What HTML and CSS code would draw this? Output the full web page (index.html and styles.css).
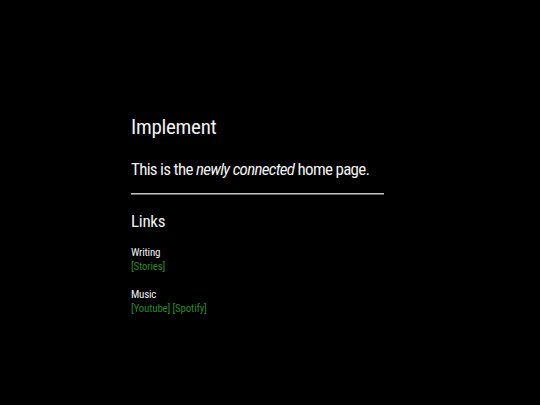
FILE: index.html
```html
<!DOCTYPE html>
<html>
<head>
<meta charset="utf-8">
<link rel="stylesheet" href="styles.css">
</head>
<body>
<main class="page">
  <h1 class="title">Implement</h1>
  <p class="lead">This is the <em>newly connected</em> home page.</p>
  <hr class="rule">
  <h2 class="section">Links</h2>
  <div class="group">
    <div class="label">Writing</div>
    <div class="links"><a href="#">[Stories]</a></div>
  </div>
  <div class="group">
    <div class="label">Music</div>
    <div class="links"><a href="#">[Youtube]</a> <a href="#">[Spotify]</a></div>
  </div>
</main>
</body>
</html>
```
FILE: styles.css
```css
html, body {
  margin: 0;
  background: #000;
}
body {
  font-family: "Liberation Sans Narrow", "Roboto Condensed", "Open Sans Condensed", "DejaVu Sans", sans-serif;
  color: #f0f0f0;
}
.page {
  width: 253px;
  margin-left: 131px;
  padding-top: 113px;
}
.title {
  margin: 0;
  font-size: 21px;
  font-weight: normal;
  letter-spacing: -0.3px;
  line-height: 28px;
}
.lead {
  margin: 17px 0 0;
  font-size: 17px;
  font-weight: normal;
  letter-spacing: -0.7px;
  line-height: 22px;
  white-space: nowrap;
}
.rule {
  margin: 13px 0 0;
  border: 0;
  border-top: 1px solid #c0c0c0;
  border-bottom: 1px solid #6a6a6a;
  height: 0;
}
.section {
  margin: 15px 0 0;
  font-size: 17px;
  font-weight: normal;
  letter-spacing: -0.3px;
  line-height: 22px;
}
.group {
  margin-top: 14px;
  font-size: 11px;
  letter-spacing: -0.2px;
  line-height: 14px;
}
.group + .group {
  margin-top: 14px;
}
.links a {
  color: #2b862b;
  text-decoration: none;
}
```
